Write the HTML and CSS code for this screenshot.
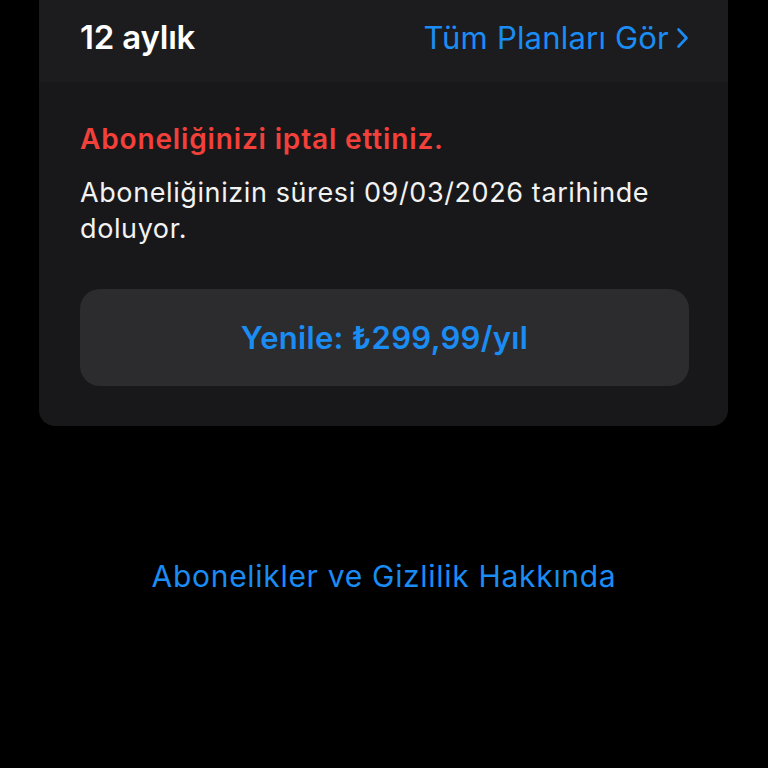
FILE: index.html
```html
<!DOCTYPE html>
<html lang="tr">
<head>
  <meta charset="UTF-8">
  <meta name="viewport" content="width=device-width, initial-scale=1">
  <title>Abonelik</title>
  <link rel="stylesheet" href="styles.css">
</head>
<body>

<div class="card">
  <div class="plan-row">
    <span class="plan-name">12 aylık</span>
    <a class="plans-link" href="#">Tüm Planları Gör
      <svg class="chevron" width="13" height="22" viewBox="0 0 13 22">
        <path d="M2.5 2.5 L10.5 11 L2.5 19.5" fill="none" stroke="currentColor" stroke-width="2.6" stroke-linecap="round" stroke-linejoin="round"/>
      </svg>
    </a>
  </div>
  <div class="status">
    <p class="cancelled">Aboneliğinizi iptal ettiniz.</p>
    <p class="expiry">Aboneliğinizin süresi 09/03/2026 tarihinde doluyor.</p>
    <button class="renew">Yenile: ₺299,99/yıl</button>
  </div>
</div>

<div class="footer">
  <a href="#">Abonelikler ve Gizlilik Hakkında</a>
</div>

</body>
</html>
```

FILE: styles.css
```css
body {
  font-family: Inter, "Noto Sans", sans-serif;
  background: #000;
  color: white;
  margin: 0;
}
.card {
  margin-left: 39px;
  width: 689px;
  background: #18181a;
  border-radius: 0 0 16px 16px;
  overflow: hidden;
}
.plan-row {
  height: 82px;
  background: #1c1c1e;
  display: flex;
  justify-content: space-between;
  align-items: center;
  padding: 0 39px 8px 41px;
  box-sizing: border-box;
}
.plan-name {
  font-size: 33px;
  font-weight: 600;
  letter-spacing: -0.2px;
}
.plans-link {
  color: #1a8cf3;
  text-decoration: none;
  font-size: 31px;
  letter-spacing: 0.2px;
  display: flex;
  align-items: center;
  gap: 7px;
}
.chevron {
  margin-top: 2px;
}
.status {
  padding: 40px 39px 40px 41px;
}
.cancelled {
  margin: 0;
  color: #f2403a;
  font-size: 28px;
  line-height: 34px;
  font-weight: 600;
  letter-spacing: 0.85px;
}
.expiry {
  margin: 19px 0 0;
  font-size: 27px;
  line-height: 36px;
  letter-spacing: 0.6px;
  color: #f2f2f2;
}
.renew {
  display: block;
  width: 100%;
  height: 97px;
  margin-top: 42px;
  border: none;
  border-radius: 20px;
  background: #2c2c2e;
  color: #1a8cf3;
  font-family: inherit;
  font-size: 31px;
  font-weight: 600;
  letter-spacing: 0.3px;
  cursor: pointer;
}
.footer {
  text-align: center;
  margin-top: 132px;
  line-height: 36px;
}
.footer a {
  color: #1a8cf3;
  text-decoration: none;
  font-size: 30px;
  letter-spacing: 0.7px;
}
```
